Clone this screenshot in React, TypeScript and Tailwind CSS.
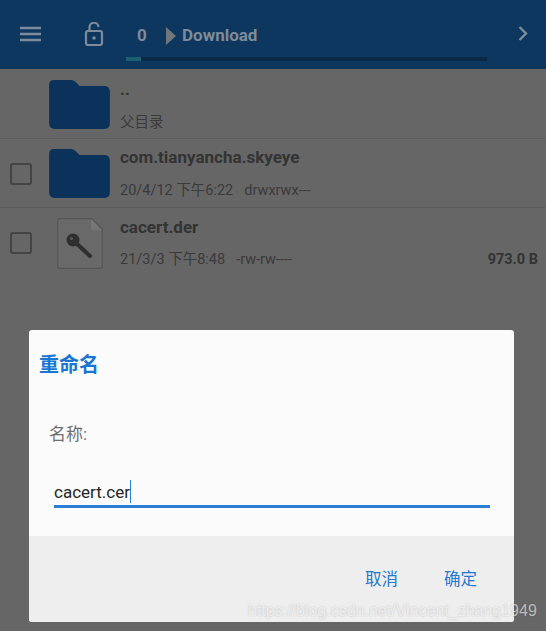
import React from "react";

const CJK = `Roboto, "Noto Sans CJK SC", sans-serif`;

function Folder() {
  return (
    <svg width="61" height="49" viewBox="0 0 62 50" className="block">
      <path d="M5 0H22Q25 0 27 2L31 6H56Q62 6 62 12V44Q62 50 56 50H6Q0 50 0 44V5Q0 0 5 0Z" fill="#0a325a" />
    </svg>
  );
}

function KeyFile() {
  return (
    <svg width="46" height="51" viewBox="0 0 46 51" className="ml-[1px] block">
      <path d="M3 .6H35L45.4 11V48Q45.4 50.4 43 50.4H3Q.6 50.4.6 48V3Q.6.6 3 .6Z" fill="#696969" stroke="#565656" strokeWidth="1.2" />
      <path d="M34 1V10Q34 12.5 37 12.5H45Z" fill="#767676" />
      <circle cx="16" cy="22" r="6.5" fill="#2f2f2f" />
      <path d="M18 24L33 38" stroke="#2f2f2f" strokeWidth="4" strokeLinecap="round" />
      <circle cx="14.5" cy="20.5" r="1.5" fill="#5c5c5c" />
    </svg>
  );
}

function Box() {
  return <div className="h-[22px] w-[22px] rounded-[3px] border-[2.5px] border-[#444444]" />;
}

function Row({ check, icon, name, meta, perm, size, rowClass, nameClass, metaClass }: { check?: boolean; icon: React.ReactNode; name: string; meta: string; perm?: string; size?: string; rowClass: string; nameClass: string; metaClass: string }) {
  return (
    <div className={`flex items-stretch ${rowClass}`}>
      <div className="flex w-[42px] items-center justify-end pr-[10px] pt-[1px]">{check && <Box />}</div>
      <div className="flex w-[68px] items-center justify-center pl-[7px] pt-[1px]">{icon}</div>
      <div className="ml-[10px] flex flex-1 flex-col pr-[8px]">
        <div className={`h-[20px] text-[17px] leading-[20px] font-bold text-[#333333] ${nameClass}`}>{name}</div>
        <div className={`flex h-[18px] items-center text-[14.5px] leading-[18px] text-[#3a3a3a] ${metaClass}`}>
          <span>{meta}</span>
          {perm && <span className="ml-[11px]">{perm}</span>}
          {size && <span className="ml-auto font-bold text-[#333333]">{size}</span>}
        </div>
      </div>
    </div>
  );
}

export default function App() {
  return (
    <div className="relative h-[631px] w-[546px] overflow-hidden bg-[#666666]" style={{ fontFamily: CJK }}>
      <header className="flex h-[69px] bg-[#0d375f]">
        <div className="flex w-[60px] items-center justify-center pb-[1px]">
          <svg width="22" height="16" viewBox="0 0 22 16" fill="none" stroke="#7c8c9c" strokeWidth="2.5">
            <path d="M1 2H22M1 8H22M1 14H22" />
          </svg>
        </div>
        <div className="flex w-[66px] items-center justify-center pb-[1px] pl-[2px]">
          <svg width="20" height="24" viewBox="0 0 20 24" fill="none" stroke="#7c8c9c" strokeWidth="2.2">
            <rect x="2" y="9" width="16" height="14" rx="2" />
            <path d="M5.5 9V5.5A4.5 4.5 0 0 1 14.5 5" />
            <circle cx="10" cy="16" r="1.8" fill="#7c8c9c" stroke="none" />
          </svg>
        </div>
        <div className="flex w-[361px] flex-col">
          <div className="mt-[25px] flex h-[21px] items-center text-[17px] leading-[21px] font-bold text-[#7f8b97]">
            <span className="ml-[11px] w-[17px]">0</span>
            <svg width="10" height="18" viewBox="0 0 10 18" className="ml-[12px]"><path d="M0 0L10 9L0 18Z" fill="#70767c" /></svg>
            <span className="ml-[6px]">Download</span>
          </div>
          <div className="mt-[11px] flex h-[4px] bg-[#0a2946]">
            <div className="h-full w-[15px] bg-[#1c5e72]" />
          </div>
        </div>
        <div className="flex flex-1 items-center justify-end pr-[18px] pb-[2px]">
          <svg width="10" height="15" viewBox="0 0 10 15" fill="none" stroke="#7c8c9c" strokeWidth="2.4"><path d="M1.5 1L8 7.5L1.5 14" /></svg>
        </div>
      </header>

      <Row icon={<Folder />} name=".." meta="父目录" rowClass="h-[70px] border-b border-[#5c5c5c]" nameClass="mt-[10px]" metaClass="mt-[15px]" />
      <Row check icon={<Folder />} name="com.tianyancha.skyeye" meta="20/4/12 下午6:22" perm="drwxrwx---" rowClass="h-[69px] border-b border-[#5c5c5c]" nameClass="mt-[8px]" metaClass="mt-[15px]" />
      <Row check icon={<KeyFile />} name="cacert.der" meta="21/3/3 下午8:48" perm="-rw-rw----" size="973.0 B" rowClass="h-[69px]" nameClass="mt-[9px]" metaClass="mt-[14px]" />

      <div className="absolute top-[330px] left-[29px] flex h-[292px] w-[485px] flex-col overflow-hidden rounded-[3px] bg-[#fbfbfb]">
        <div className="flex-1 pr-[24px]">
          <div className="mt-[23px] ml-[10px] text-[20px] leading-[24px] font-bold text-[#1976d2]">重命名</div>
          <div className="mt-[46px] ml-[20px] text-[17px] leading-[22px] text-[#6f6f6f]">名称:</div>
          <div className="mt-[36px] ml-[25px] flex h-[27px] items-center border-b-[3px] border-[#2a7fd4] pb-[3px] text-[17px] leading-[24px] text-[#262626]">
            <span>cacert.cer</span>
            <span className="h-[23px] w-[1px] bg-[#2a7fd4]" />
          </div>
        </div>
        <div className="flex h-[86px] items-start justify-end gap-[46px] bg-[#eeeeee] pt-[33px] pr-[37px] text-[16.5px] leading-[22px] text-[#1f78d1]">
          <span>取消</span>
          <span>确定</span>
        </div>
      </div>

      <div className="absolute top-[600px] left-[248px] text-[16px] leading-[22px] whitespace-nowrap text-[#ffffff99] [text-shadow:0_0_2px_rgba(0,0,0,0.2)]" style={{ fontFamily: `"Liberation Sans", sans-serif` }}>
        https://blog.csdn.net/Vincent_zhang1949
      </div>
    </div>
  );
}
